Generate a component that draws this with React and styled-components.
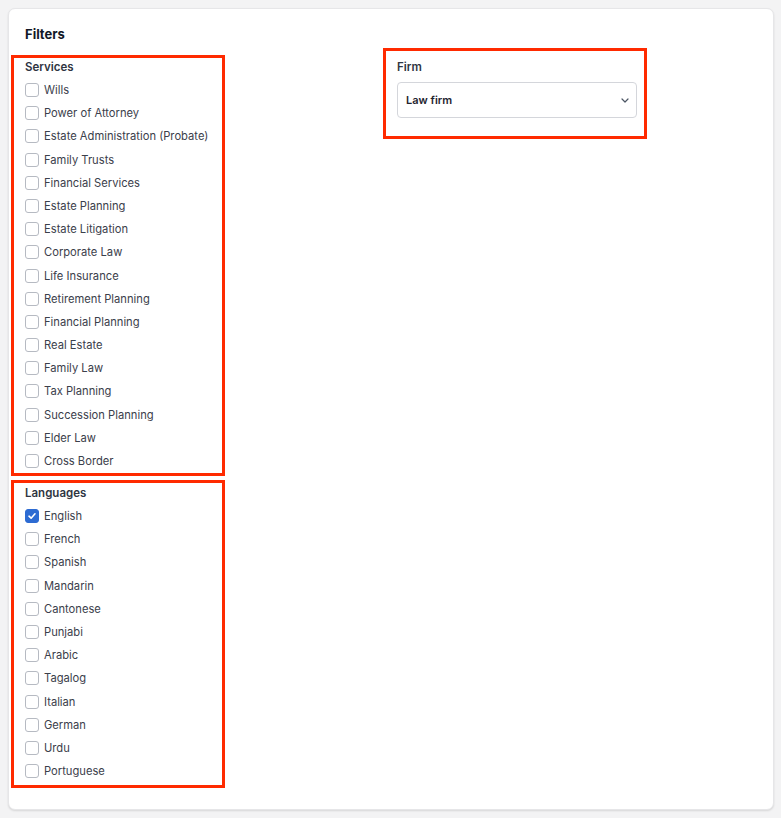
import React from 'react';
import styled, { createGlobalStyle } from 'styled-components';

const services = [
  'Wills',
  'Power of Attorney',
  'Estate Administration (Probate)',
  'Family Trusts',
  'Financial Services',
  'Estate Planning',
  'Estate Litigation',
  'Corporate Law',
  'Life Insurance',
  'Retirement Planning',
  'Financial Planning',
  'Real Estate',
  'Family Law',
  'Tax Planning',
  'Succession Planning',
  'Elder Law',
  'Cross Border'
];

const languages = [
  'English',
  'French',
  'Spanish',
  'Mandarin',
  'Cantonese',
  'Punjabi',
  'Arabic',
  'Tagalog',
  'Italian',
  'German',
  'Urdu',
  'Portuguese'
];

const CheckItem = ({ label, checked }) => (
  <Item>
    <Box checked={checked}>
      {checked && (
        <svg width="10" height="10" viewBox="0 0 10 10">
          <path d="M2 5.2 L4.1 7.2 L8 2.8" fill="none" stroke="white" strokeWidth="1.6" strokeLinecap="round" strokeLinejoin="round" />
        </svg>
      )}
    </Box>
    <ItemText>{label}</ItemText>
  </Item>
);

const App = () => {
  const [firm, setFirm] = React.useState('Law firm');

  return (
    <>
      <GlobalStyle />
      <Card>
        <Title>Filters</Title>
        <Columns>
          <LeftColumn>
            <Group>
              <GroupLabel>Services</GroupLabel>
              <List>
                {services.map((s) => (
                  <CheckItem key={s} label={s} />
                ))}
              </List>
            </Group>
            <Group>
              <GroupLabel>Languages</GroupLabel>
              <List>
                {languages.map((l) => (
                  <CheckItem key={l} label={l} checked={l === 'English'} />
                ))}
              </List>
            </Group>
          </LeftColumn>
          <FirmGroup>
            <GroupLabel>Firm</GroupLabel>
            <SelectWrap>
              <Select value={firm} onChange={(e) => setFirm(e.target.value)}>
                <option>Law firm</option>
                <option>Financial firm</option>
              </Select>
              <Chevron width="8" height="5" viewBox="0 0 8 5">
                <path d="M1 1 L4 4 L7 1" fill="none" stroke="#4b5563" strokeWidth="1.2" strokeLinecap="round" strokeLinejoin="round" />
              </Chevron>
            </SelectWrap>
          </FirmGroup>
        </Columns>
      </Card>
    </>
  );
};

const GlobalStyle = createGlobalStyle`
  html, body {
    margin: 0;
    padding: 0;
    background: #f3f3f4;
  }
  body {
    padding: 8px 7px 8px 8px;
    font-family: Inter, "Noto Sans", sans-serif;
    color: #374151;
  }
`;

const Card = styled.div`
  background: white;
  border: 1px solid #e6e6e8;
  border-radius: 7px;
  box-shadow: 0 1px 2px rgba(0, 0, 0, 0.12);
  padding: 17px 0 21px 2px;
  min-height: 802px;
  box-sizing: border-box;
`;

const Title = styled.h2`
  font-size: 13px;
  font-weight: 700;
  line-height: 16px;
  color: #111827;
  margin: 0 0 6px 14px;
`;

const Columns = styled.div`
  display: grid;
  grid-template-columns: 214px 264px;
  column-gap: 158px;
  align-items: start;
`;

const LeftColumn = styled.div`
  display: flex;
  flex-direction: column;
  gap: 4px;
  padding-top: 7px;
`;

const Group = styled.div`
  border: 3px solid #ff2a00;
  padding: 1px 11px 5px 11px;

  & + & {
    padding-top: 2px;
    padding-bottom: 7px;
  }
`;

const FirmGroup = styled.div`
  border: 3px solid #ff2a00;
  padding: 8px 7px 18px 11px;
`;

const GroupLabel = styled.div`
  font-size: 11.5px;
  font-weight: 600;
  line-height: 16px;
  color: #2f3542;
`;

const List = styled.div`
  display: flex;
  flex-direction: column;
  gap: 9.2px;
  margin-top: 8px;
`;

const Item = styled.label`
  display: flex;
  align-items: center;
  gap: 5px;
  height: 14px;
  cursor: pointer;
`;

const Box = styled.span`
  width: 14px;
  height: 14px;
  box-sizing: border-box;
  border-radius: 3px;
  border: 1px solid ${(p) => (p.checked ? '#2d6bd2' : '#b6bac2')};
  background: ${(p) => (p.checked ? '#2d6bd2' : 'white')};
  display: flex;
  align-items: center;
  justify-content: center;
  flex-shrink: 0;
`;

const ItemText = styled.span`
  font-size: 11.2px;
  line-height: 14px;
  color: #3b404b;
  white-space: nowrap;
`;

const SelectWrap = styled.div`
  position: relative;
  margin-top: 7px;
`;

const Select = styled.select`
  appearance: none;
  width: 100%;
  height: 36px;
  box-sizing: border-box;
  border: 1px solid #d4d6db;
  border-radius: 4px;
  background: white;
  padding: 0 24px 0 8px;
  font-family: Inter, "Noto Sans", sans-serif;
  font-size: 11px;
  font-weight: 600;
  color: #1f2430;
  outline: none;
`;

const Chevron = styled.svg`
  position: absolute;
  right: 8px;
  top: 16px;
  pointer-events: none;
`;

export default App;
